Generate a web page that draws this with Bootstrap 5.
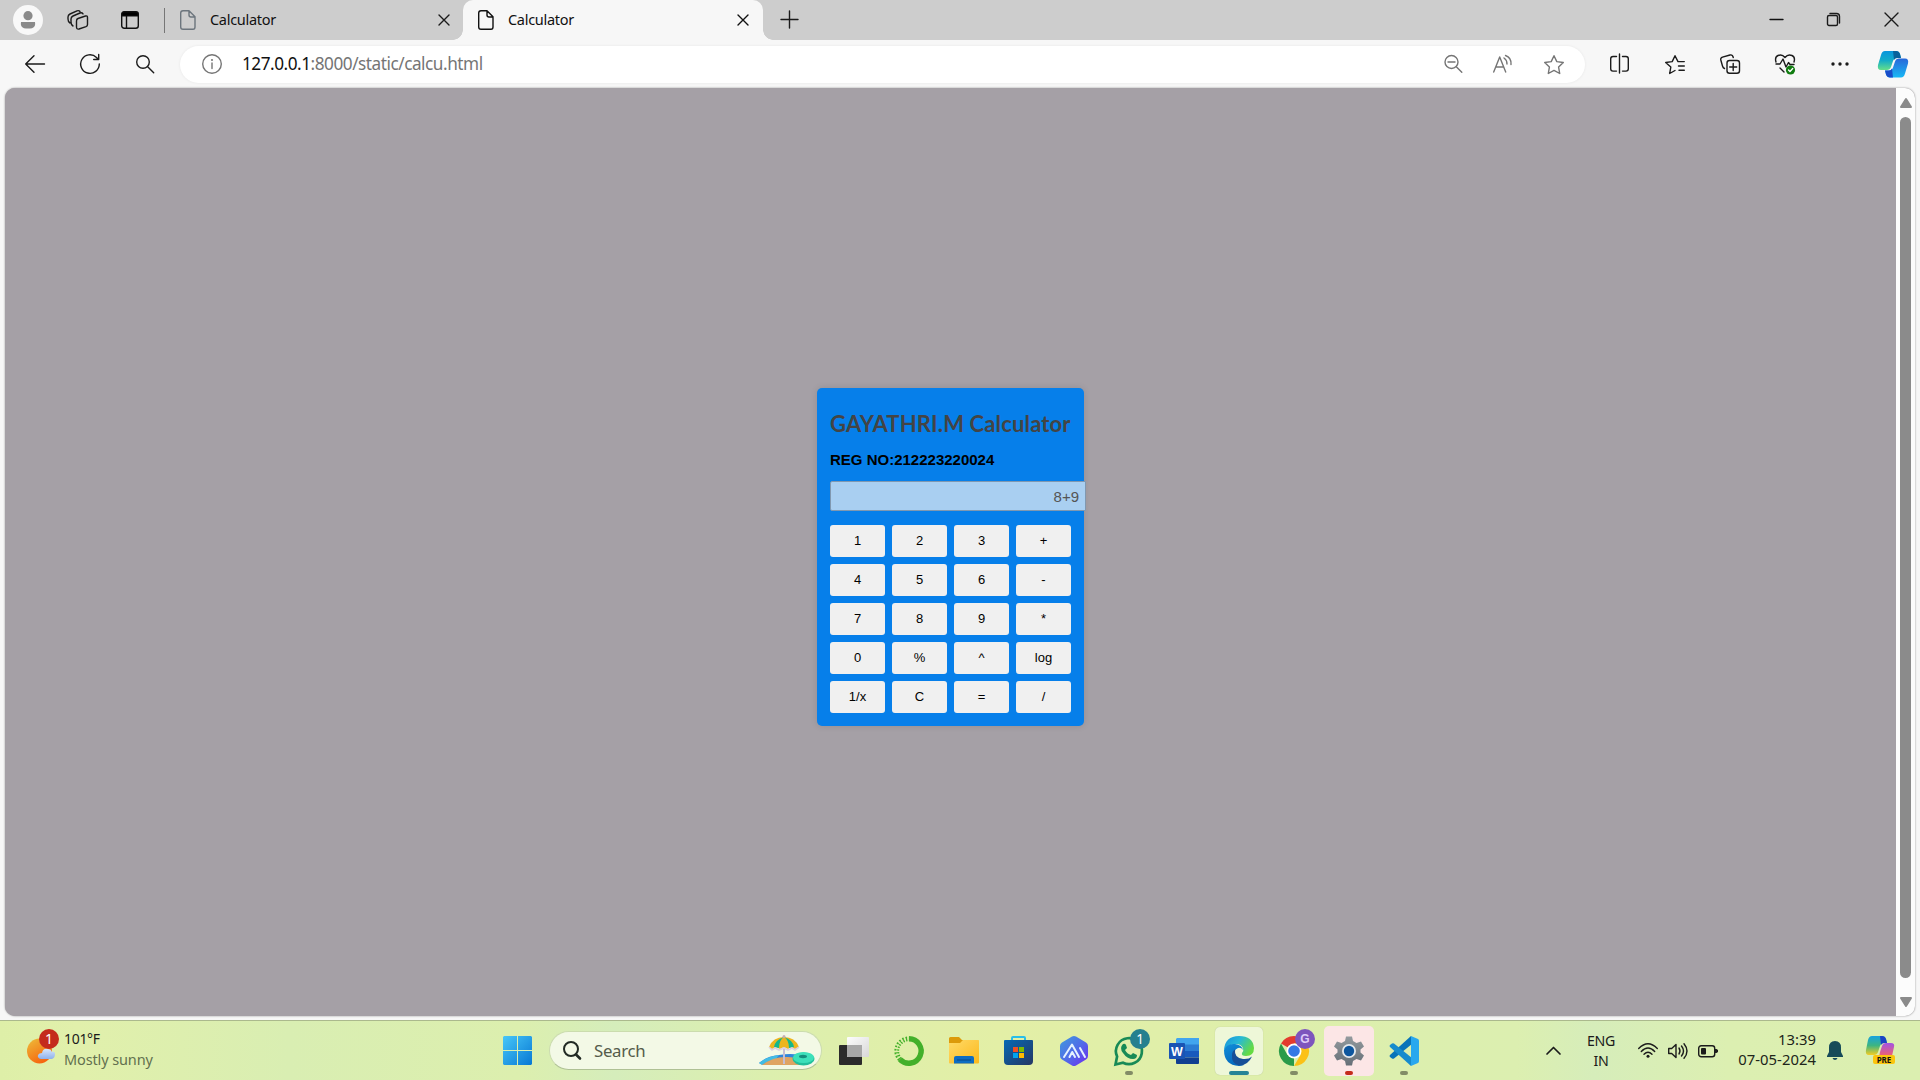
<!DOCTYPE html>
<html lang="en">
<head>
<meta charset="utf-8">
<meta name="viewport" content="width=device-width, initial-scale=1">
<title>Calculator</title>
<link href="https://cdn.jsdelivr.net/npm/bootstrap@5.3.0/dist/css/bootstrap.min.css" rel="stylesheet">
<style>
  body { width: 1920px; height: 1080px; overflow: hidden; background: #f7f7f7; color: #1b1b1b; font-family: "Noto Sans", "Open Sans", sans-serif; font-size: 14.5px; line-height: 20px; }
  svg { display: block; overflow: visible; flex: none; }
  .ln { fill: none; stroke: currentColor; stroke-width: 1.4; stroke-linecap: round; stroke-linejoin: round; }
  .slot { display: flex; align-items: center; justify-content: center; flex: none; }

  /* tab strip */
  .tabstrip { height: 40px; background: #cdcdcd; flex: none; }
  .w-avatar { width: 56px; } .w-spaces { width: 44px; } .w-acts { width: 60px; padding-right: 0; }
  .tab-rule { width: 1px; height: 25px; background: #767676; margin-left: 4px; }
  .browser-tab { height: 40px; padding: 0 14px 0 15px; }
  .tab-idle { width: 298px; }
  .tab-active { width: 300px; padding-right: 15px; background: #f7f7f7; border-radius: 10px 10px 0 0; position: relative; color: #111; }
  .tab-active::before, .tab-active::after { content: ""; position: absolute; bottom: 0; width: 10px; height: 10px; }
  .tab-active::before { left: -10px; background: radial-gradient(circle at 0 0, transparent 9.5px, #f7f7f7 10px); }
  .tab-active::after { right: -10px; background: radial-gradient(circle at 100% 0, transparent 9.5px, #f7f7f7 10px); }
  .tab-text { margin-left: 14px; padding-bottom: 2px; font-size: 14.5px; letter-spacing: -.3px; color: #111; }
  .w-plus { width: 52px; } .w-win { width: 57.5px; }

  /* toolbar */
  .toolbar { height: 48px; flex: none; padding-left: 7px; color: #1b1b1b; }
  .w-tool { width: 55px; } .w-copilot { width: 51px; }
  .address { width: 1405px; height: 37px; margin: 0 7px 0 8px; background: #fff; border-radius: 19px; box-shadow: 0 0 3px rgba(0,0,0,.07); color: #757575; flex: none; }
  .w-info { width: 63px; } .w-addr { width: 50.5px; }
  .addr-tools { padding-right: 6px; }
  .url-text { font-size: 17.2px; letter-spacing: -.47px; color: #757575; white-space: nowrap; margin-left: -1px; }
  .url-text b { font-weight: 400; color: #111; }

  /* page view */
  .pageview { height: 928px; margin: 0 5px; background: #a5a0a6; border-radius: 10px; overflow: hidden; flex: none; box-shadow: 0 0 2px #888; }
  .stage { background: #a5a0a6; }
  .scroller { width: 19px; background: #fcfcfc; padding: 10px 0 9px; }
  .thumb { width: 11px; height: 861px; border-radius: 6px; background: #8b8b8b; margin-top: 9px; }
  .calc { width: 267px; height: 338px; margin-top: 10px; padding: 13px; background: #067fea; border-radius: 5px; box-shadow: 0 0 7px rgba(0,0,0,.12); font-family: "Liberation Sans", Arial, sans-serif; }
  .calc-title { font: 700 22px/30px Lato, sans-serif; letter-spacing: .15px; color: #444; margin: 8px 0 0; white-space: nowrap; }
  .calc-reg { font-size: 15px; line-height: 18px; font-weight: 700; color: #000; margin: 12px 0 0; }
  .calc-screen { width: 256px; height: 30px; margin: 12px 0 14px; padding: 0 6px; border: 1px solid #8098b0; border-radius: 2px 0 0 2px; background: #a9cff1; color: #555; font-size: 15px; text-align: right; line-height: 28px; outline: 0; display: block; }
  .keys { display: grid; grid-template-columns: repeat(4, 55px); gap: 7px; }
  .keys .btn { height: 32px; padding: 0; border: 0; border-radius: 3px; background: #f0f0f0; color: #000; font-size: 13px; line-height: 30px; }

  /* taskbar */
  .taskbar { height: 60px; margin-top: 4px; border-top: 1px solid #abb98d; background: linear-gradient(90deg, #deefa8 0, #e1f0ab 4%, #d9eeb2 15%, #dcefae 27%, #d5edbb 32%, #dcefae 40%, #e3efa6 52%, #e0efa9 60%, #dcefae 73%, #dcefb0 79%, #d6edba 83%, #dcefb1 90%, #dbefb0 100%); }
  .dockbox { width: 490px; padding-left: 27px; }
  .weather { margin: -3px 0 0 5px; font-size: 14px; line-height: 20px; letter-spacing: -.3px; }
  .weather small { display: block; font-size: 14.5px; letter-spacing: -.12px; color: #63704f; }
  .searchpill { width: 273px; height: 39px; margin: 0 4px; padding: 0 6px 0 13px; border-radius: 20px; background: #f3f9e6; border: 1px solid #cbdcae; border-bottom-color: #afc195; }
  .searchpill span { font-size: 16.8px; letter-spacing: -.3px; margin-left: 13px; color: #555c4b; }
  .task { width: 55px; height: 59px; position: relative; }
  .task::after { content: ""; position: absolute; bottom: 5px; height: 4px; border-radius: 2px; background: var(--dot, transparent); width: var(--dotw, 8px); }
  .running { --dot: #828c66; } .focused { --dot: #268496; --dotw: 20px; } .alerting { --dot: #c42b1c; }
  .tile { width: 48px; height: 48px; border-radius: 5px; display: flex; align-items: center; justify-content: center; }
  .tile-on { background: #eef7d8; box-shadow: 0 0 1px #acb98e; } .tile-hot { background: #fce6e6; width: 50px; height: 50px; }
  .pip { position: absolute; left: 29px; top: 8px; width: 20px; height: 20px; border-radius: 50%; background: #25808f; color: #fff; font-size: 13.5px; line-height: 20px; text-align: center; }
  .pip-g { background: #7d55bd; color: #ddccf8; font: 700 12px/20px "Liberation Sans", sans-serif; }
  .w46 { width: 46px; } .w50 { width: 50px; margin-right: 7px; } .w30 { width: 30px; } .w38 { width: 38px; } .w52 { width: 52px; margin-right: 14px; }
  .clock { width: 93px; line-height: 20px; letter-spacing: .05px; font-size: 14.8px; color: #20251a; margin-top: -4px; }
  .lang { line-height: 20px; font-size: 14.2px; letter-spacing: -.35px; text-align: center; }
</style>
<script src="https://cdn.jsdelivr.net/npm/bootstrap@5.3.0/dist/js/bootstrap.bundle.min.js"></script>
</head>
<body class="d-flex flex-column">

<header class="tabstrip d-flex align-items-center">
  <div class="slot w-avatar"><svg width="30" height="30"><circle cx="15" cy="15" r="15" fill="#f8f8f8"/><circle cx="15" cy="10.7" r="4.6" fill="#8a8a8a"/><path d="M8 17h14q1 5-3 6.200q-4 .8-8 0Q7 22 8 17z" fill="#8a8a8a"/></svg></div>
  <div class="slot w-spaces"><svg class="ln" width="22" height="20"><path d="M3 13Q1 12 1 9V7Q1 5 3 4L10 .8q2-.6 3 .7M6 16q-2-1-2-4V9q0-2 2-3l7-3q2-.6 3 .9"/><path d="M11 8.500 18.500 6q2-.5 2 1.500v7q0 1.500-1.500 2.200L12 19q-2.500.5-2.500-2v-6q0-2 1.500-2.500z"/></svg></div>
  <div class="slot w-acts"><svg width="18" height="18"><rect x=".7" y=".7" width="16.600" height="16.600" rx="2.500" fill="none" stroke="#111" stroke-width="1.400"/><path d="M1 5V2q0-1 2-1h12q2 0 2 1v3z" stroke="#111"/><path d="M5.500 5v12" stroke="#111" stroke-width="1.400"/></svg></div>
  <div class="tab-rule"></div>
  <div class="browser-tab tab-idle d-flex align-items-center">
    <svg class="ln text-secondary" width="16" height="20"><path d="M3 .7h6l6 6V17q0 2.300-2 2.300H3Q.7 19.300.7 17V3Q.7.7 3 .7zM9 1v4q0 2 2 2h4"/></svg>
    <span class="tab-text">Calculator</span>
    <svg class="ln ms-auto" width="10" height="10"><path d="M0 0l10 10M10 0 0 10"/></svg>
  </div>
  <div class="browser-tab tab-active d-flex align-items-center">
    <svg class="ln" width="16" height="20"><path d="M3 .7h6l6 6V17q0 2.300-2 2.300H3Q.7 19.300.7 17V3Q.7.7 3 .7zM9 1v4q0 2 2 2h4"/></svg>
    <span class="tab-text">Calculator</span>
    <svg class="ln ms-auto" width="10" height="10"><path d="M0 0l10 10M10 0 0 10"/></svg>
  </div>
  <div class="slot w-plus"><svg class="ln" width="17" height="18"><path d="M0 8.500h17M8.500 0v17"/></svg></div>
  <div class="ms-auto d-flex">
    <div class="slot w-win"><svg class="ln" width="13" height="14"><path d="M0 6.500h13" stroke="#111"/></svg></div>
    <div class="slot w-win"><svg class="ln" width="13" height="14"><rect x=".5" y="2.500" width="10" height="10" rx="1.500"/><path d="M3 .5h6.500q3 0 3 3V10"/></svg></div>
    <div class="slot w-win"><svg class="ln" width="13" height="14"><path d="M0 0l13 13M13 0 0 13"/></svg></div>
  </div>
</header>

<nav class="toolbar d-flex align-items-center">
  <div class="slot w-tool"><svg class="ln" width="20" height="18"><path d="M19.500 9H.7M9 .7.7 9 9 17.300"/></svg></div>
  <div class="slot w-tool"><svg class="ln" width="20" height="20"><path d="M19.300 10A9.300 9.300 0 1 1 16.500 3.400L18.500 5.500M18.700.5v5h-5"/></svg></div>
  <div class="slot w-tool"><svg class="ln" width="18" height="18"><circle cx="7" cy="7" r="6.300"/><path d="M11.700 11.700l6 6"/></svg></div>
  <div class="address d-flex align-items-center">
    <div class="slot w-info"><svg class="ln" width="20" height="20"><circle cx="10" cy="10" r="9.300"/><path d="M10 9v5.500"/><circle cx="10" cy="6" r=".4"/></svg></div>
    <div class="url-text"><b>127.0.0.1</b>:8000/static/calcu.html</div>
    <div class="ms-auto d-flex addr-tools">
      <div class="slot w-addr"><svg class="ln" width="18" height="18"><circle cx="7.500" cy="7" r="6.500"/><path d="M12.300 11.700l5.500 5.500M4 7h7"/></svg></div>
      <div class="slot w-addr"><svg class="ln" width="20" height="18"><path d="M.7 17 6.700 2l6 15M3 12h7.500M11 3q3 2 3 6M12.500.5q6 2 5.500 9"/></svg></div>
      <div class="slot w-addr"><svg class="ln" width="20" height="19"><path d="M10 .7 12.800 6.600l6.500.9-4.700 4.600 1.100 6.400L10 15.400l-5.700 3.100 1.100-6.400L.7 7.500l6.500-.9z"/></svg></div>
    </div>
  </div>
  <div class="slot w-tool"><svg class="ln" width="20" height="20"><path d="M9.500 0v19M6.500 2.500H3q-2.300 0-2.300 2.300v10q0 2.300 2.300 2.300h3.500M12.500 2.500H16q2.300 0 2.300 2.300v10q0 2.300-2.300 2.300h-3.500"/></svg></div>
  <div class="slot w-tool"><svg class="ln" width="20" height="19"><path d="M10 15.500l-5.300 3 1.100-6.400L.7 7.500l6.500-.9L10 .7l3 5.900h6.300M13.500 11h5.800M14 15.300h5.300"/></svg></div>
  <div class="slot w-tool"><svg class="ln" width="20" height="20"><path d="M4.500 14.500Q3 14 2.500 12L.8 6Q.3 4 2.500 3.200L10 1q2.500-.6 3.300 2.500"/><rect x="7" y="6.500" width="12.500" height="12.800" rx="2.500"/><path d="M13.200 9.500v7M9.700 13h7"/></svg></div>
  <div class="slot w-tool"><svg class="ln" width="20" height="20"><path d="M1 8Q-.5 3 3 1.500 7-.3 10 3.500 13-.3 17 1.500 20.500 3 19 8M1 10h4l3-5 3 8 2.500-4.500 1.500 2h4M5 14l4 4"/><circle cx="15.500" cy="16" r="4.600" fill="#107c10" stroke="none"/><path d="M13.500 16l1.500 1.500 2.700-3" stroke="#fff"/></svg></div>
  <div class="slot w-tool"><svg width="18" height="4"><g fill="#1b1b1b"><circle cx="2" cy="2" r="1.700"/><circle cx="9" cy="2" r="1.700"/><circle cx="16" cy="2" r="1.700"/></g></svg></div>
  <div class="slot w-copilot"><svg width="30" height="27" viewBox="0 0 30 27"><defs><linearGradient id="cpA" x2="0" y2="1"><stop stop-color="#0895dd"/><stop offset=".5" stop-color="#13acc8"/><stop offset="1" stop-color="#65df8a"/></linearGradient><linearGradient id="cpB" x2="0" y2="1"><stop stop-color="#2867d9"/><stop offset="1" stop-color="#18b8f5"/></linearGradient></defs><path d="M7 0h11q3 0 4 3l1 4h-4q-3 0-4 3l-2 6q-1 3-4 3H3q-4 0-3-5L3 4q1-4 4-4z" fill="url(#cpA)"/><path d="M15 0h3q3 0 4 3l1 4h-4q-2 0-3 2z" fill="#08629c"/><path d="M23 26.500H12q-3 0-4-3L7 19.500h4q3 0 4-3l2-6q1-3 4-3h6q4 0 3 5l-3 10q-1 4-4 4z" fill="url(#cpB)"/><path d="M15 26.500h-3q-3 0-4-3L7 19.500h4q2 0 3-2z" fill="#194cc9"/></svg></div>
</nav>

<main class="pageview d-flex">
  <section class="stage flex-grow-1 d-flex align-items-center justify-content-center">
    <div class="calc">
      <h1 class="calc-title">GAYATHRI.M Calculator</h1>
      <p class="calc-reg">REG NO:212223220024</p>
      <input class="calc-screen" type="text" value="8+9" readonly>
      <div class="keys">
        <button class="btn">1</button><button class="btn">2</button><button class="btn">3</button><button class="btn">+</button>
        <button class="btn">4</button><button class="btn">5</button><button class="btn">6</button><button class="btn">-</button>
        <button class="btn">7</button><button class="btn">8</button><button class="btn">9</button><button class="btn">*</button>
        <button class="btn">0</button><button class="btn">%</button><button class="btn">^</button><button class="btn">log</button>
        <button class="btn">1/x</button><button class="btn">C</button><button class="btn">=</button><button class="btn">/</button>
      </div>
    </div>
  </section>
  <aside class="scroller d-flex flex-column align-items-center justify-content-between">
    <svg width="12" height="10"><path d="M6 1l5 8H1z" fill="#8b8b8b" stroke="#8b8b8b" stroke-width="2" stroke-linejoin="round"/></svg>
    <div class="thumb mb-auto"></div>
    <svg width="12" height="10"><path d="M6 9l5-8H1z" fill="#8b8b8b" stroke="#8b8b8b" stroke-width="2" stroke-linejoin="round"/></svg>
  </aside>
</main>

<footer class="taskbar d-flex align-items-center">
  <div class="dockbox d-flex align-items-center">
    <svg width="32" height="36" viewBox="0 4 32 36"><defs><linearGradient id="sunG" x2=".6" y2="1"><stop stop-color="#edbd3a"/><stop offset="1" stop-color="#f6640e"/></linearGradient><linearGradient id="cloudG" x2="0" y2="1"><stop stop-color="#d7e6fb"/><stop offset="1" stop-color="#8eb1ec"/></linearGradient></defs><circle cx="12.500" cy="22" r="12.500" fill="url(#sunG)"/><path d="M14 30q-4-1-3-4 1-2 4-2 1-5 6-4 3 0 4 3 3-1 3 2 0 4-3 5z" fill="url(#cloudG)"/><circle cx="22" cy="10" r="10" fill="#c42b1c"/><text x="22" y="15" text-anchor="middle" font-size="14" fill="#fff">1</text></svg>
    <div class="weather">101°F<small>Mostly sunny</small></div>
  </div>
  <div class="slot task"><svg width="29" height="29"><defs><linearGradient id="winG" x2="1" y2="1" gradientUnits="objectBoundingBox"><stop stop-color="#48c7f8"/><stop offset="1" stop-color="#0778d4"/></linearGradient></defs><path d="M1 0h13v14H0V1zM15 0h13l1 1v13H15zM0 15h14v14H1l-1-1zM15 15h14v13l-1 1H15z" fill="url(#winG)"/></svg></div>
  <div class="searchpill d-flex align-items-center">
    <svg width="18" height="19"><circle cx="8" cy="8" r="7" fill="none" stroke="#222a24" stroke-width="2"/><path d="M13 13.500l4 4" stroke="#222a24" stroke-width="2.600" stroke-linecap="round"/></svg>
    <span>Search</span>
    <svg class="ms-auto" width="56" height="31" viewBox="0 0 56 31"><path d="M0 28Q8 21 20 20q16-3 27 2l-7 8H4z" fill="#3286db"/><path d="M0 28q9-7 20-8l-3 4q-9 2-14 6z" fill="#42bce4"/><path d="M3 30q12-9 26-8 10 0 16 8z" fill="#dfa463"/><path d="M25 8v21" stroke="#c5bdd2" stroke-width="2"/><path d="M10 12Q14 2 25 2t15 10l-4 2-4-2-3 2-4-2-4 2-4-2-4 2z" fill="#edb51e"/><path d="M25 2q-5 3-5 11l-5-1q1-7 10-10zm0 0q5 3 5 11l5-1q-1-7-10-10z" fill="#14b78c"/><path d="M10 12l3 3 3-2 4 2 5-2 4 2 4-2 3 2 4-3" fill="none" stroke="#dcd1e2" stroke-width="1.600"/><circle cx="25" cy="1.500" r="1.500" fill="#c5aeb4"/><ellipse cx="44.500" cy="24" rx="11" ry="6.500" fill="#22be9b"/><ellipse cx="44.500" cy="22.500" rx="10.500" ry="5.500" fill="#3ce0ba"/><ellipse cx="44" cy="21.500" rx="4" ry="1.700" fill="#138c7c"/></svg>
  </div>
  <div class="slot task"><svg width="30" height="28"><defs><linearGradient id="tvG" x2="1" y2="1"><stop stop-color="#fdfdfd"/><stop offset="1" stop-color="#d8d8d8"/></linearGradient></defs><rect y="8" width="23" height="20" rx="1" fill="#2b2b2b"/><rect x="8" width="22" height="20" rx="1" fill="url(#tvG)"/><path d="M8 8h15v12H9l-1-1z" fill="#a8a8a8"/></svg></div>
  <div class="slot task"><svg width="30" height="30"><path d="M15 2.800a12.200 12.200 0 1 1-9 20.500" fill="none" stroke="#43b02a" stroke-width="5.400"/><path d="M6 23.300A12.200 12.200 0 0 1 15 2.800" fill="none" stroke="#43b02a" stroke-width="4.800" stroke-dasharray="1.500 1.600"/><path d="M5 22A12.200 12.200 0 0 1 14 2.800" fill="none" stroke="#dff0aa" stroke-width="1" stroke-dasharray="2 1.500"/></svg></div>
  <div class="slot task"><svg width="30" height="27"><defs><linearGradient id="foG" x2="1" y2="1"><stop stop-color="#ffda68"/><stop offset="1" stop-color="#fbb91b"/></linearGradient></defs><path d="M0 1.500Q0 0 1.500 0H10l3 3h16l1 3H0z" fill="#dc9a0a"/><path d="M0 6h11l3-3h15q1 0 1 1v21.500q0 1-1 1H1q-1 0-1-1z" fill="url(#foG)"/><path d="M5 26.500V21q0-2 2-2h16q2 0 2 2v5.500z" fill="#0e6dc2"/><path d="M8 23h14" stroke="#074888"/></svg></div>
  <div class="slot task"><svg width="29" height="29"><defs><linearGradient id="stG" x2="1" y2="1"><stop stop-color="#0669b5"/><stop offset="1" stop-color="#253763"/></linearGradient></defs><path d="M8 5V2q0-1 1-1h11q1 0 1 1v3" fill="none" stroke="#29bee9" stroke-width="2"/><path d="M0 5q0-1 1-1h27q1 0 1 1v20q0 4-4 4H4q-4 0-4-4z" fill="url(#stG)"/><path d="M9 11h5v5H9z" fill="#f25022"/><path d="M15 11h5v5h-5z" fill="#7fba00"/><path d="M9 17h5v5H9z" fill="#00a4ef"/><path d="M15 17h5v5h-5z" fill="#ffb900"/></svg></div>
  <div class="slot task"><svg width="28" height="30"><defs><linearGradient id="aiG" x2="1" y2="1"><stop stop-color="#3f9bdc"/><stop offset=".5" stop-color="#506de8"/><stop offset="1" stop-color="#6d2bf0"/></linearGradient></defs><path d="M12 .6q2-1 4 0l10 5.800q2 1.200 2 3.500v10q0 2.400-2 3.500l-10 6q-2 1.200-4 0L2 23.500Q0 22.400 0 20V10q0-2.400 2-3.600z" fill="url(#aiG)"/><path d="M4 21l8-12.500L19 21M9.500 21l2.700-5 2.800 5M20 12l5 9" fill="none" stroke="#e6f2ff" stroke-width="2" stroke-linecap="round" stroke-linejoin="round"/></svg></div>
  <div class="slot task running"><svg width="30" height="30"><path d="M1.500 28.500l1.600-8A13 13 0 1 1 9 26.700z" fill="none" stroke="#188a56" stroke-width="2.700"/><path d="M9 8q2-1 3 1l1 3-2 2q2 4 6 5l2-2 4 2q0 4-4 4-6 0-10-6-4-5 0-9z" fill="#188a56"/></svg><span class="pip">1</span></div>
  <div class="slot task"><svg width="30" height="26"><path d="M8 0h22v7H7V1z" fill="#41a5ee"/><path d="M7 6.500h23V13H7z" fill="#2b7cd3"/><path d="M7 13h23v6.500H7z" fill="#185abd"/><path d="M7 19.500h23V25q0 1-1 1H8q-1 0-1-1z" fill="#103f91"/><rect y="5" width="16" height="16" rx="1" fill="#1954b4"/><text x="8" y="17.500" text-anchor="middle" font-family="Liberation Sans" font-weight="700" font-size="12.500" fill="#fff">W</text></svg></div>
  <div class="slot task focused"><div class="tile tile-on"><svg width="30" height="30" viewBox="0 0 30 30"><defs><linearGradient id="edA" x2="1" y2=".5"><stop stop-color="#1790de"/><stop offset=".5" stop-color="#28b9d5"/><stop offset="1" stop-color="#65db43"/></linearGradient><linearGradient id="edB" x2=".4" y2="1"><stop stop-color="#118ed9"/><stop offset="1" stop-color="#0669bd"/></linearGradient></defs><path d="M0 14Q1 0 15 0q14 0 15 12 0 8-8 8-5 0-4-3 2-2 1-5-2-4-7-4Q4 8 0 14z" fill="url(#edA)"/><path d="M0 14Q3 7 11 8q7 1 8 6-2-3-5-2-5 2-3 8 2 7 9 9-3 1-5 1Q0 29 0 14z" fill="url(#edB)"/><path d="M11 13.500q-1 8.500 8 9.500 6 .5 9-2.500-4 9-13 9Q7 27 8 19q0-4 3-5.500z" fill="#174f97"/></svg></div></div>
  <div class="slot task running"><svg width="30" height="30"><path d="M15 15 2 7.500A15 15 0 0 1 28 7.500H15z" fill="#e33b2e"/><path d="M15 15v15A15 15 0 0 1 2 7.500L8.500 19z" fill="#2a9b49"/><path d="M15 7.500h13A15 15 0 0 1 15 30l6.500-11z" fill="#fbc116"/><circle cx="15" cy="15" r="7.500" fill="#fff"/><circle cx="15" cy="15" r="5.800" fill="#3478e5"/></svg><span class="pip pip-g">G</span></div>
  <div class="slot task alerting"><div class="tile tile-hot"><svg width="30" height="30" viewBox="-15 -15 30 30"><defs><linearGradient id="geG" x2="0" y2="1"><stop stop-color="#939a9e"/><stop offset="1" stop-color="#666f77"/></linearGradient></defs><path d="M-3-14.500H3L4-10 7.500-8 12-9.500 15-4.500 11.500-1.500v3L15 4.500 12 9.500 7.500 8 4 10 3 14.500H-3L-4 10-7.500 8-12 9.500-15 4.500-11.500 1.500v-3L-15-4.500-12-9.500-7.500-8-4-10z" fill="url(#geG)"/><circle r="7" fill="#e4e8ec"/><circle r="5.200" fill="#0d569e"/></svg></div></div>
  <div class="slot task running"><svg width="30" height="30" viewBox="0 0 30 30"><path d="M22 0 1 19q-1 1 0 2l2 1.500q1 .5 2 0L23 8z" fill="#0873b9"/><path d="M22 30 1 11q-1-1 0-2l2-1.500q1-.5 2 0L23 22z" fill="#168bcd"/><path d="M22 0l7 3q1 .5 1 2v20q0 1.500-1 2l-7 3V0z" fill="#29a8ee"/></svg></div>

  <div class="ms-auto d-flex align-items-center">
    <div class="slot w46"><svg class="ln" width="13" height="8"><path d="M0 7 6.500 .500 13 7" stroke-width="1.700"/></svg></div>
    <div class="slot w50 lang">ENG<br>IN</div>
    <div class="slot w30"><svg class="ln" width="20" height="16"><path d="M.7 5.500Q10-4 19.300 5.500M3.300 8.500Q10 1.500 16.700 8.500M6 11.300q4-4 8 0"/><circle cx="10" cy="13.300" r="1.500" fill="#1b1b1b" stroke="none"/></svg></div>
    <div class="slot w30"><svg class="ln" width="20" height="16"><path d="M.7 5.500h3L8 1.500v13l-4.300-4h-3zM11 5q2 3 0 6M13.500 3q4 5 0 10M16 .7q6 7.300 0 14.600"/></svg></div>
    <div class="slot w30"><svg width="20" height="12"><rect x=".7" y=".7" width="16" height="11" rx="2.500" class="ln"/><rect x="3" y="3" width="5" height="6.500" rx="1" fill="#1b1b1b"/><path d="M17 4h1.500l1.500 1v2l-1.500 1H17z" fill="#1b1b1b"/></svg></div>
    <div class="clock text-end">13:39<br>07-05-2024</div>
    <div class="slot w38"><svg width="16" height="19"><path d="M8 0q6 0 6 6.500V11l2 4v1H0v-1l2-4V6.500Q2 0 8 0zM5.500 17h5q-.7 2-2.500 2t-2.500-2z" fill="#174b59"/></svg></div>
    <div class="slot w52"><svg width="29" height="29" viewBox="0 0 29 29"><defs><linearGradient id="prA" x2="0" y2="1"><stop stop-color="#17a2df"/><stop offset=".5" stop-color="#3db581"/><stop offset="1" stop-color="#f4cd23"/></linearGradient><linearGradient id="prB" x2="0" y2="1"><stop stop-color="#a353e4"/><stop offset="1" stop-color="#f0626d"/></linearGradient></defs><path d="M6 0h10q3 0 4 3l1 4h-3q-3 0-4 3l-2 6q-1 3-4 3H3q-4 0-3-5L2 4q1-4 4-4z" fill="url(#prA)"/><path d="M14 0h2q3 0 4 3l1 4h-3q-2 0-3 2z" fill="#1b43c4"/><path d="M16 10q1-3 4-3h5q4 0 3 4l-2 9H12q2-1 2-4z" fill="url(#prB)"/><rect x="7" y="19" width="22" height="9" rx="2" fill="#fbc50d"/><text x="18" y="26.500" text-anchor="middle" font-family="Noto Sans" font-weight="700" font-size="8" fill="#111">PRE</text></svg></div>
  </div>
</footer>
</body>
</html>
